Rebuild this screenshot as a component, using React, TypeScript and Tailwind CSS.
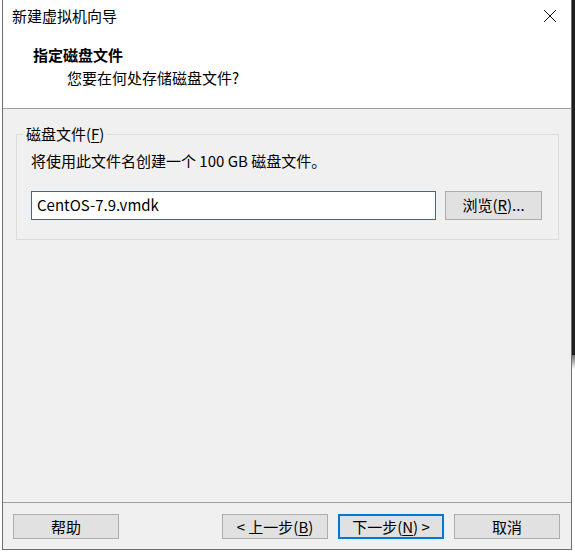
import * as React from 'react';

const font = { fontFamily: '"Noto Sans CJK SC", "Noto Sans", sans-serif' };

function WinButton({ children, primary }: { children: React.ReactNode; primary?: boolean }) {
  return (
    <button
      className={
        primary
          ? 'h-[25px] w-[106px] bg-[#e1e1e1] border-2 border-[#0078d7] text-[15px] leading-none text-black flex items-center justify-center'
          : 'h-[25px] w-[106px] bg-[#e1e1e1] border border-[#adadad] text-[15px] leading-none text-black flex items-center justify-center'
      }
    >
      {children}
    </button>
  );
}

export default function App() {
  return (
    <div className="w-[575px] h-[553px] bg-white flex overflow-hidden" style={font}>
      <div className="w-[2px] shrink-0 bg-white" />
      <div className="w-[570px] h-[550px] shrink-0 flex flex-col bg-[#f0f0f0] border-x border-b border-[#6e6e6e]">
        {/* title bar */}
        <div className="h-[33px] shrink-0 bg-white flex items-center pl-[9px] pr-[14px]">
          <span className="text-[15px] text-black leading-none -mt-[2px]">新建虚拟机向导</span>
          <div className="flex-1" />
          <svg width="14" height="14" viewBox="0 0 14 14" className="-mt-[2px]">
            <path d="M1 1 L13 13 M13 1 L1 13" stroke="#111" strokeWidth="1" fill="none" />
          </svg>
        </div>
        {/* header */}
        <div className="h-[76px] shrink-0 bg-white border-b border-[#a0a0a0] flex flex-col pt-[12px]">
          <div className="pl-[30px] text-[15px] font-bold leading-[20px] text-black">指定磁盘文件</div>
          <div className="pl-[64px] mt-[3px] text-[15px] leading-[20px] text-black">您要在何处存储磁盘文件?</div>
        </div>
        {/* body */}
        <div className="flex-1 min-h-0 px-[13px] pt-[25px] pr-[12px]">
          <div className="relative h-[106px] border border-[#dcdcdc] px-[14px] pr-[16px] pt-[16px]">
            <span className="absolute left-[6px] -top-[11px] bg-[#f0f0f0] px-[3px] text-[15px] leading-[20px] text-black">
              磁盘文件(<span className="underline underline-offset-2">F</span>)
            </span>
            <div className="text-[15px] leading-[20px] text-black">将使用此文件名创建一个 100 GB 磁盘文件。</div>
            <div className="mt-[20px] flex items-center gap-[9px]">
              <div className="h-[29px] flex-1 bg-white border border-[#0078d7] flex items-center pl-[5px] text-[15px] text-black">
                CentOS-7.9.vmdk
              </div>
              <button className="h-[29px] w-[97px] bg-[#e1e1e1] border border-[#adadad] text-[15px] text-black flex items-center justify-center">
                浏览(<span className="underline underline-offset-2">R</span>)...
              </button>
            </div>
          </div>
        </div>
        {/* footer */}
        <div className="h-[47px] shrink-0 border-t border-[#a0a0a0] flex pt-[11px] pl-[10px] pr-[11px]">
          <WinButton>帮助</WinButton>
          <div className="flex-1" />
          <div className="flex gap-[10px]">
            <WinButton>
              &lt; 上一步(<span className="underline underline-offset-2">B</span>)
            </WinButton>
            <WinButton primary>
              下一步(<span className="underline underline-offset-2">N</span>) &gt;
            </WinButton>
            <WinButton>取消</WinButton>
          </div>
        </div>
      </div>
      <div className="w-[3px] shrink-0 flex flex-col">
        <div className="h-[355px] bg-[#1f1f1f]" />
        <div className="h-[14px] bg-gradient-to-b from-[#6a6a6a] to-white" />
        <div className="flex-1 bg-white" />
      </div>
    </div>
  );
}
